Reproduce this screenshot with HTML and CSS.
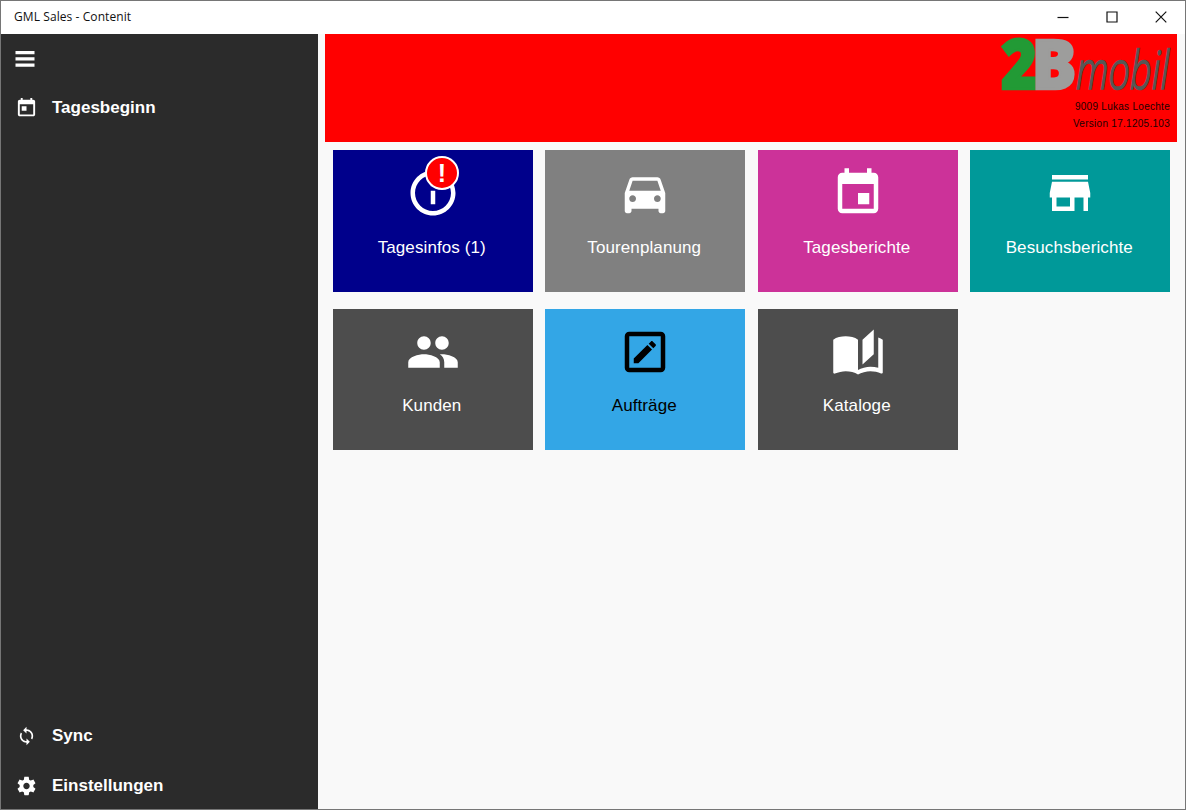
FILE: index.html
```html
<!DOCTYPE html>
<html lang="de">
<head>
    <meta charset="UTF-8">
    <title>GML Sales - Contenit</title>
    <link rel="stylesheet" href="styles.css">
</head>

<body>
<div class="window">
    <div class="titlebar">
        <span class="title">GML Sales - Contenit</span>
        <div class="controls">
            <svg width="12" height="12" viewBox="0 0 12 12"><path d="M.5 6.5h11"/></svg>
            <svg width="12" height="12" viewBox="0 0 12 12"><path d="M1 1h10v10H1z"/></svg>
            <svg width="12" height="12" viewBox="0 0 12 12"><path d="M.7.7l10.6 10.6M11.3.7L.7 11.3"/></svg>
        </div>
    </div>
    <div class="content">
        <nav class="sidebar">
            <svg class="burger" width="20" height="16" viewBox="0 0 20 16"><path d="M.5 0h19v3.3H.5zM.5 6.2h19v3.3H.5zM.5 12.4h19v3.3H.5z"/></svg>
            <div class="nav-item">
                <svg width="23" height="22" viewBox="0 0 24 24" preserveAspectRatio="none"><path d="M19 3h-1V1h-2v2H8V1H6v2H5c-1.11 0-1.99.9-1.99 2L3 19c0 1.1.89 2 2 2h14c1.1 0 2-.9 2-2V5c0-1.1-.9-2-2-2zm0 16H5V8h14v11zM7 10h5v5H7z"/></svg>
                <span>Tagesbeginn</span>
            </div>
            <div class="nav-bottom">
                <div class="nav-item">
                    <svg width="23" height="20" viewBox="0 0 24 24"><path d="M12 4V1L8 5l4 4V6c3.31 0 6 2.69 6 6 0 1.01-.25 1.97-.7 2.8l1.46 1.46C19.54 15.03 20 13.57 20 12c0-4.42-3.58-8-8-8zm0 14c-3.31 0-6-2.69-6-6 0-1.01.25-1.97.7-2.8L5.24 7.74C4.46 8.97 4 10.43 4 12c0 4.42 3.58 8 8 8v3l4-4-4-4v3z"/></svg>
                    <span>Sync</span>
                </div>
                <div class="nav-item">
                    <svg width="23" height="22" viewBox="0 0 24 24"><path d="M19.43 12.98c.04-.32.07-.64.07-.98s-.03-.66-.07-.98l2.11-1.65c.19-.15.24-.42.12-.64l-2-3.46c-.12-.22-.39-.3-.61-.22l-2.49 1c-.52-.4-1.08-.73-1.69-.98l-.38-2.65C14.46 2.18 14.25 2 14 2h-4c-.25 0-.46.18-.49.42l-.38 2.65c-.61.25-1.17.59-1.69.98l-2.49-1c-.23-.09-.49 0-.61.22l-2 3.46c-.13.22-.07.49.12.64l2.11 1.65c-.04.32-.07.65-.07.98s.03.66.07.98l-2.11 1.65c-.19.15-.24.42-.12.64l2 3.46c.12.22.39.3.61.22l2.49-1c.52.4 1.08.73 1.69.98l.38 2.65c.03.24.24.42.49.42h4c.25 0 .46-.18.49-.42l.38-2.65c.61-.25 1.17-.59 1.69-.98l2.49 1c.23.09.49 0 .61-.22l2-3.46c.12-.22.07-.49-.12-.64l-2.11-1.65zM12 15.5c-1.93 0-3.5-1.57-3.5-3.5s1.57-3.5 3.5-3.5 3.5 1.57 3.5 3.5-1.57 3.5-3.5 3.5z"/></svg>
                    <span>Einstellungen</span>
                </div>
            </div>
        </nav>
        <main>
            <header>
                <svg class="logo" width="176" height="60" viewBox="0 0 176 60">
                    <text class="logo-2" x="5" y="55.2" textLength="36" lengthAdjust="spacingAndGlyphs">2</text>
                    <text class="logo-b" x="35.5" y="55.2" textLength="45" lengthAdjust="spacingAndGlyphs">B</text>
                    <text class="logo-mobil" x="80" y="55.2" textLength="93" lengthAdjust="spacingAndGlyphs">mobil</text>
                </svg>
                <div class="user">9009 Lukas Loechte</div>
                <div class="user">Version 17.1205.103</div>
            </header>
            <div class="tiles">
                <div class="tile blue">
                    <svg viewBox="0 0 24 24"><path d="M11 17h2v-6h-2v6zm1-15C6.48 2 2 6.48 2 12s4.48 10 10 10 10-4.48 10-10S17.52 2 12 2zm0 18c-4.41 0-8-3.59-8-8s3.59-8 8-8 8 3.59 8 8-3.59 8-8 8zM11 9h2V7h-2v2z"/></svg>
                    <div class="badge">!</div>
                    <span>Tagesinfos (1)</span>
                </div>
                <div class="tile gray">
                    <svg viewBox="0 0 24 24"><path d="M18.92 6.01C18.72 5.42 18.16 5 17.5 5h-11c-.66 0-1.21.42-1.42 1.01L3 12v8c0 .55.45 1 1 1h1c.55 0 1-.45 1-1v-1h12v1c0 .55.45 1 1 1h1c.55 0 1-.45 1-1v-8l-2.08-5.99zM6.5 16c-.83 0-1.5-.67-1.5-1.5S5.67 13 6.5 13s1.5.67 1.5 1.5S7.33 16 6.5 16zm11 0c-.83 0-1.5-.67-1.5-1.5s.67-1.5 1.5-1.5 1.5.67 1.5 1.5-.67 1.5-1.5 1.5zM5 11l1.5-4.5h11L19 11H5z"/></svg>
                    <span>Tourenplanung</span>
                </div>
                <div class="tile pink">
                    <svg viewBox="0 0 24 24"><path d="M17 12h-5v5h5v-5zM16 1v2H8V1H6v2H5c-1.11 0-1.99.9-1.99 2L3 19c0 1.1.89 2 2 2h14c1.1 0 2-.9 2-2V5c0-1.1-.9-2-2-2h-1V1h-2zm3 18H5V8h14v11z"/></svg>
                    <span>Tagesberichte</span>
                </div>
                <div class="tile teal">
                    <svg viewBox="0 0 24 24"><path d="M20 4H4v2h16V4zm1 10v-2l-1-5H4l-1 5v2h1v6h10v-6h4v6h2v-6h1zm-9 4H6v-4h6v4z"/></svg>
                    <span>Besuchsberichte</span>
                </div>
                <div class="tile dark">
                    <svg viewBox="0 0 24 24"><path d="M16 11c1.66 0 2.99-1.34 2.99-3S17.66 5 16 5c-1.66 0-3 1.34-3 3s1.34 3 3 3zm-8 0c1.66 0 2.99-1.34 2.99-3S9.66 5 8 5C6.34 5 5 6.34 5 8s1.34 3 3 3zm0 2c-2.33 0-7 1.17-7 3.5V19h14v-2.5c0-2.33-4.67-3.5-7-3.5zm8 0c-.29 0-.62.02-.97.05 1.16.84 1.97 1.97 1.97 3.45V19h6v-2.5c0-2.33-4.67-3.5-7-3.5z"/></svg>
                    <span>Kunden</span>
                </div>
                <div class="tile sky">
                    <svg viewBox="0 0 24 24"><path d="M19 19V5H5v14h14m0-16a2 2 0 0 1 2 2v14c0 1.11-.9 2-2 2H5a2 2 0 0 1-2-2V5a2 2 0 0 1 2-2h14m-2.3 6.35l-1 1-2.05-2.05 1-1c.21-.22.56-.22.77 0l1.28 1.28c.22.21.22.56 0 .77M7 14.94l6.06-6.06 2.06 2.06L9.06 17H7v-2.06z"/></svg>
                    <span>Aufträge</span>
                </div>
                <div class="tile dark">
                    <svg viewBox="0 0 24 24"><path d="M19 2l-5 4.5v11l5-4.5V2M6.5 5C4.55 5 2.45 5.4 1 6.5v14.66c0 .25.25.5.5.5.1 0 .15-.07.25-.07C3.1 20.94 5.05 20.5 6.5 20.5c1.95 0 4.05.4 5.5 1.5 1.35-.85 3.8-1.5 5.5-1.5 1.65 0 3.35.31 4.75 1.06.1.05.15.03.25.03.25 0 .5-.25.5-.5V6.5c-.6-.45-1.25-.75-2-1V19c-1.1-.35-2.3-.5-3.5-.5-1.7 0-4.15.65-5.5 1.5V6.5C10.55 5.4 8.45 5 6.5 5z"/></svg>
                    <span>Kataloge</span>
                </div>
            </div>
        </main>
    </div>
</div>
</body>
</html>
```
FILE: styles.css
```css
* {
    box-sizing: border-box;
}

body {
    margin: 0;
    font-family: "Liberation Sans", Arial, sans-serif;
}

.window {
    display: flex;
    flex-direction: column;
    width: 1186px;
    height: 810px;
    border: 1px solid #767676;
    background: #f9f9f9;
}

.titlebar {
    display: flex;
    justify-content: space-between;
    align-items: center;
    height: 33px;
    padding: 0 18px 2px 13px;
    background: white;
}

.title {
    font: 12px "Open Sans", "Noto Sans", sans-serif;
    letter-spacing: .08px;
    color: #111;
}

.controls {
    display: flex;
    gap: 37px;
}

.controls svg {
    fill: none;
    stroke: #111;
    stroke-width: 1.2;
}

.content {
    display: flex;
    flex: 1;
}

.sidebar {
    display: flex;
    flex-direction: column;
    width: 317px;
    padding-top: 17px;
    background: #2b2b2b;
    fill: white;
}

.burger {
    margin: 0 0 16px 14px;
}

.nav-item {
    display: flex;
    align-items: center;
    gap: 14px;
    height: 50px;
    padding-left: 14px;
    color: white;
    font-size: 17px;
    font-weight: bold;
}

.nav-bottom {
    margin-top: auto;
    margin-bottom: -2px;
}

main {
    flex: 1;
    padding: 0 8px 0 7px;
}

header {
    display: flex;
    flex-direction: column;
    align-items: flex-end;
    height: 108px;
    padding-right: 7px;
    background: red;
}

.logo {
    margin-bottom: 4px;
    margin-right: -2px;
    overflow: visible;
}

.logo-2, .logo-b {
    font: 800 69px "Open Sans", sans-serif;
    fill: #229a35;
    stroke: #229a35;
    stroke-width: 2.5;
}

.logo-b {
    fill: #9d9d9c;
    stroke: #9d9d9c;
}

.logo-mobil {
    font: italic 300 54px "Open Sans", sans-serif;
    fill: #575756;
    stroke: #575756;
    stroke-width: 1.7;
}

.user {
    font-size: 10px;
    line-height: 17px;
    letter-spacing: .28px;
    color: #200;
}

.tiles {
    display: grid;
    grid-template-columns: repeat(4, 200px);
    grid-auto-rows: 141.5px;
    gap: 17px 12.5px;
    padding: 8px 0 0 7.5px;
}

.tile {
    position: relative;
    display: flex;
    flex-direction: column;
    align-items: center;
    padding-top: 16px;
    color: white;
    font-size: 17px;
    letter-spacing: .1px;
}

.tile svg {
    width: 54px;
    height: 54px;
    margin-bottom: 17.5px;
    fill: currentColor;
}

.tile span {
    padding-right: 1.5px;
}

.badge {
    position: absolute;
    top: 6px;
    left: 92.5px;
    width: 34px;
    height: 34px;
    border: 2px solid white;
    border-radius: 50%;
    background: red;
    font-size: 25px;
    font-weight: bold;
    line-height: 31px;
    text-align: center;
}

.blue { background: #00008b; }
.gray { background: #808080; }
.pink { background: #cc3299; }
.teal { background: #009999; }
.dark { background: #4d4d4d; }
.sky { background: #33a6e6; color: black; }
```
